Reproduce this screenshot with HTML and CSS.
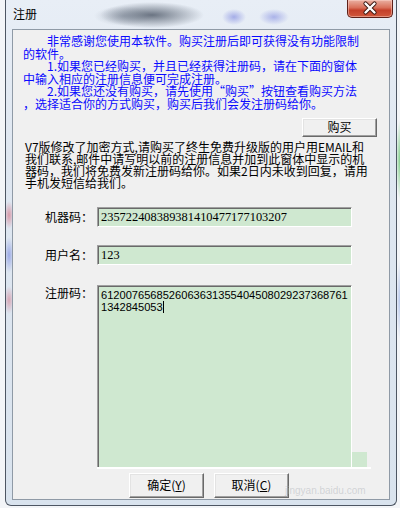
FILE: index.html
```html
<!DOCTYPE html>
<html lang="zh-CN">
<head>
<meta charset="utf-8">
<title>注册</title>
<link rel="stylesheet" href="styles.css">
</head>
<body>
<div class="win">
  <div class="titlebar">
    <span class="title">注册</span>
    <div class="close">
      <svg width="46" height="18" viewBox="0 0 46 18">
        <path d="M18.5 4.5 L27.5 13.5 M27.5 4.5 L18.5 13.5" stroke="#3a1812" stroke-width="4.2" stroke-linecap="round" fill="none"/>
        <path d="M18.5 4.5 L27.5 13.5 M27.5 4.5 L18.5 13.5" stroke="#ffffff" stroke-width="2.4" stroke-linecap="round" fill="none"/>
      </svg>
    </div>
  </div>
  <div class="client">
    <div class="notice">
      <div class="ln ind">非常感谢您使用本软件。购买注册后即可获得没有功能限制</div>
      <div class="ln">的软件。</div>
      <div class="ln ind">1.如果您已经购买，并且已经获得注册码，请在下面的窗体</div>
      <div class="ln">中输入相应的注册信息便可完成注册。</div>
      <div class="ln ind">2.如果您还没有购买，请先使用“购买”按钮查看购买方法</div>
      <div class="ln">，选择适合你的方式购买，购买后我们会发注册码给你。</div>
    </div>
    <div class="buy-row"><button class="btn buy">购买</button></div>
    <div class="info">
      <div class="ln">V7版修改了加密方式,请购买了终生免费升级版的用户用EMAIL和</div>
      <div class="ln">我们联系,邮件中请写明以前的注册信息并加到此窗体中显示的机</div>
      <div class="ln">器码，我们将免费发新注册码给你。如果2日内未收到回复，请用</div>
      <div class="ln">手机发短信给我们。</div>
    </div>
    <div class="field f1">
      <span class="label">机器码：</span>
      <div class="input serif">235722408389381410477177103207</div>
    </div>
    <div class="field f2">
      <span class="label">用户名：</span>
      <div class="input serif">123</div>
    </div>
    <div class="field f3">
      <span class="label">注册码：</span>
      <div class="reg-wrap">
        <div class="reg">6120076568526063631355404508029237368761<br>1342845053<span class="caret"></span></div>
      </div>
    </div>
    <div class="actions">
      <button class="btn act">确定(<u>Y</u>)</button>
      <button class="btn act">取消(<u>C</u>)</button>
    </div>
    <span class="watermark">jingyan.baidu.com</span>
  </div>
</div>
</body>
</html>
```

FILE: styles.css
```css
html, body {
  margin: 0;
  padding: 0;
}
body {
  width: 400px;
  height: 508px;
  overflow: hidden;
  background:
    radial-gradient(ellipse 4px 40px at 400px 160px, rgba(80, 190, 90, 0.7), transparent),
    radial-gradient(ellipse 4px 40px at 400px 300px, rgba(90, 130, 220, 0.4), transparent),
    #f3f5f8;
  font-family: "Noto Sans CJK SC", "Noto Sans", sans-serif;
}
.win {
  position: relative;
  margin-left: 5px;
  width: 392px;
  height: 506px;
  box-sizing: border-box;
  padding: 0 6px 5px 6px;
  border: 1px solid #4d5663;
  border-top: none;
  border-radius: 0 0 6px 6px;
  background:
    radial-gradient(ellipse 52px 13px at 146px 15px, rgba(85, 95, 110, 0.85), rgba(85, 95, 110, 0) 100%),
    radial-gradient(ellipse 30px 10px at 118px 16px, rgba(150, 160, 175, 0.6), rgba(150, 160, 175, 0) 100%),
    radial-gradient(ellipse 12px 8px at 228px 17px, rgba(110, 120, 220, 0.55), rgba(110, 120, 220, 0) 100%),
    radial-gradient(ellipse 15px 8px at 268px 17px, rgba(110, 120, 220, 0.5), rgba(110, 120, 220, 0) 100%),
    radial-gradient(ellipse 5px 14px at 3px 215px, rgba(210, 90, 110, 0.55), rgba(210, 90, 110, 0) 100%),
    radial-gradient(ellipse 5px 18px at 3px 255px, rgba(90, 110, 220, 0.5), rgba(90, 110, 220, 0) 100%),
    radial-gradient(ellipse 5px 14px at 3px 300px, rgba(210, 90, 110, 0.45), rgba(210, 90, 110, 0) 100%),
    linear-gradient(180deg, #e8eef6 0%, #dfe7f1 30%, #d9e3ee 100%);
}
.titlebar {
  position: relative;
  height: 29px;
  margin: 0 -6px;
}
.title {
  position: absolute;
  left: 7px;
  top: 7px;
  font-size: 12px;
  line-height: 14px;
  color: #000;
}
.close {
  position: absolute;
  right: 3px;
  top: 0;
  width: 46px;
  height: 18px;
  box-sizing: border-box;
  border: 1px solid #5e2119;
  border-top: none;
  border-radius: 0 0 5px 5px;
  background: linear-gradient(180deg, #eab0a2 0%, #d9705a 45%, #c4402a 60%, #d0583c 100%);
  box-shadow: inset 0 0 0 1px rgba(255, 220, 210, 0.45);
}
.close svg {
  position: absolute;
  left: -1px;
  top: -1px;
}
.client {
  position: relative;
  height: 471px;
  box-sizing: border-box;
  border: 1px solid #8f9aa6;
  background: #f0f0f0;
  display: flex;
  flex-direction: column;
}
.ln {
  white-space: nowrap;
}
.notice {
  padding: 5px 0 0 10px;
  color: #0a0aff;
  font-size: 12px;
  line-height: 12.6px;
}
.ind {
  padding-left: 24px;
}
.buy-row {
  display: flex;
  justify-content: flex-end;
  padding-right: 12px;
  margin-top: 7px;
}
.btn {
  font-family: "Noto Sans CJK SC", "Noto Sans", sans-serif;
  font-size: 12px;
  color: #000;
  background: #f0f0f0;
  border: 1px solid;
  border-color: #ffffff #696969 #696969 #ffffff;
  box-shadow: inset -1px -1px 0 #a0a0a0, inset 1px 1px 0 #e3e3e3;
  padding: 0;
  margin: 0;
  box-sizing: border-box;
}
.btn u {
  text-decoration: underline;
}
.buy {
  width: 75px;
  height: 19px;
  line-height: 16px;
}
.info {
  margin-top: 4px;
  padding-left: 12px;
  color: #000;
  font-size: 12px;
  line-height: 12px;
}
.field {
  display: flex;
  align-items: center;
  padding-left: 32px;
}
.f1 { margin-top: 18px; }
.f2 { margin-top: 18px; }
.f3 {
  margin-top: 20px;
  align-items: flex-start;
}
.label {
  width: 52px;
  flex: none;
  font-size: 12px;
  line-height: 14px;
  color: #000;
}
.f3 .label {
  padding-top: 1px;
}
.input {
  width: 255px;
  height: 20px;
  box-sizing: border-box;
  background: #cfe8d0;
  border-top: 1px solid #a0a0a0;
  border-left: 1px solid #a0a0a0;
  border-right: 1px solid #ffffff;
  border-bottom: 1px solid #ffffff;
  box-shadow: inset 1px 1px 0 #696969;
  padding: 2px 0 0 3px;
  color: #000;
  white-space: nowrap;
  overflow: hidden;
}
.serif {
  font-family: "Liberation Serif", "DejaVu Serif", serif;
  font-size: 12.4px;
  line-height: 15px;
}
.reg-wrap {
  position: relative;
  width: 274px;
  height: 185px;
}
.reg {
  width: 255px;
  height: 182px;
  box-sizing: border-box;
  background: #cfe8d0;
  border-top: 1px solid #a0a0a0;
  border-left: 1px solid #a0a0a0;
  border-right: 1px solid #ffffff;
  box-shadow: inset 1px 1px 0 #696969;
  padding: 3px 0 0 3px;
  font-family: "Liberation Sans", Arial, sans-serif;
  font-size: 11.1px;
  line-height: 12px;
  color: #000;
  white-space: nowrap;
  overflow: hidden;
}
.caret {
  display: inline-block;
  width: 1px;
  height: 12px;
  background: #000;
  vertical-align: -2px;
}
.reg-wrap::before {
  content: "";
  position: absolute;
  left: 255px;
  top: 167px;
  width: 15px;
  height: 15px;
  background: #cfe8d0;
}
.reg-wrap::after {
  content: "";
  position: absolute;
  left: 0;
  top: 182px;
  width: 274px;
  height: 2px;
  background: #ffffff;
}
.actions {
  display: flex;
  gap: 10px;
  margin-top: 3px;
  padding-left: 116px;
}
.act {
  width: 75px;
  height: 25px;
  line-height: 22px;
}
.watermark {
  position: absolute;
  left: 272px;
  top: 455px;
  font-family: "Liberation Sans", Arial, sans-serif;
  font-size: 10px;
  line-height: 12px;
  color: rgba(170, 175, 180, 0.45);
}
```
